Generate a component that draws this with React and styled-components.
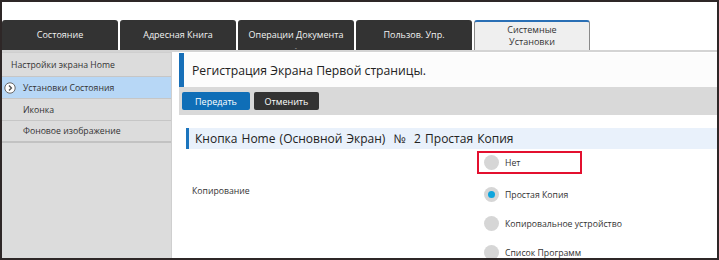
import React from 'react'
import styled, { createGlobalStyle } from 'styled-components'

const Global = createGlobalStyle`
  html, body { margin: 0; padding: 0; background: #fff; }
  body { font-family: "Open Sans", "Noto Sans", sans-serif; }
  * { box-sizing: border-box; }
`

const Frame = styled.div`
  width: 719px;
  height: 260px;
  border: 2px solid #2e2727;
  overflow: hidden;
  background: #fff;
  display: flex;
  flex-direction: column;
`

const TopGap = styled.div`
  height: 18px;
  flex: none;
`

const TabBar = styled.div`
  display: flex;
  gap: 2px;
  height: 32px;
  flex: none;
  border-bottom: 2px solid #d4d4d4;
`

const Tab = styled.div`
  width: 116px;
  height: 30px;
  display: flex;
  flex-direction: column;
  align-items: center;
  justify-content: center;
  text-align: center;
  font-size: 9px;
  line-height: 12px;
  border-radius: 3px 3px 0 0;
  background: ${p => (p.active ? '#efefef' : '#333333')};
  color: ${p => (p.active ? '#333' : '#f2f2f2')};
  border-top: ${p => (p.active ? '2px solid #2a6fb5' : 'none')};
  border-left: ${p => (p.active ? '1px solid #8a8a8a' : 'none')};
  border-right: ${p => (p.active ? '1px solid #8a8a8a' : 'none')};
  position: relative;
`

const TabDash = styled.span`
  position: absolute;
  bottom: -1px;
  font-size: 7px;
  line-height: 6px;
  color: #aaa;
`

const Body = styled.div`
  flex: 1;
  display: flex;
  min-height: 0;
`

const Sidebar = styled.div`
  width: 170px;
  flex: none;
  background: #dcdcdc;
  border-right: 1px solid #cfcfcf;
  border-top: 1px solid #cfcfcf;
`

const SideHeader = styled.div`
  height: 23px;
  padding-left: 9px;
  display: flex;
  align-items: center;
  font-size: 8.7px;
  color: #333;
`

const SideItem = styled.div`
  height: 23px;
  display: flex;
  align-items: center;
  padding-left: 21px;
  position: relative;
  font-size: 8.7px;
  color: #333;
  border-top: 1px solid #c6c6c6;
  border-bottom: 1px solid #c6c6c6;
  margin-bottom: -1px;
  background: ${p => (p.selected ? '#b7d7f6' : 'transparent')};
  &:last-child {
    border-bottom: 2px solid #c2c2c2;
  }
`

const SideIcon = styled.svg`
  position: absolute;
  left: 2px;
  top: 5px;
`

const Main = styled.div`
  flex: 1;
  padding: 1px 0 0 7px;
  display: flex;
  flex-direction: column;
  min-width: 0;
`

const TitleBox = styled.div`
  height: 34px;
  flex: none;
  background: #fcfcfc;
  border-left: 5px solid #176fb8;
  display: flex;
  align-items: center;
  padding-left: 8px;
  font-size: 12.2px;
  color: #222;
`

const Toolbar = styled.div`
  height: 28px;
  flex: none;
  background: #d9d9d9;
  display: flex;
  align-items: center;
  gap: 4px;
  padding-left: 3px;
`

const Button = styled.button`
  height: 18px;
  padding: 0;
  width: ${p => (p.primary ? '68px' : '65px')};
  border: none;
  border-radius: 2px;
  font-family: inherit;
  font-size: 9px;
  color: #fff;
  background: ${p => (p.primary ? '#0f6eb7' : '#333333')};
`

const Section = styled.div`
  margin: 13px 0 0 7px;
  height: 21px;
  flex: none;
  background: #e9f1fb;
  border-left: 3px solid #1b74bd;
  display: flex;
  align-items: center;
  padding-left: 6px;
  font-size: 12px;
  color: #222;
  word-spacing: 1px;
`

const FormRow = styled.div`
  display: grid;
  grid-template-columns: 285px 1fr;
  margin-left: 13px;
  margin-top: 2px;
`

const FieldLabel = styled.div`
  font-size: 8.7px;
  color: #333;
  padding-top: 34px;
`

const Options = styled.div`
  display: flex;
  flex-direction: column;
`

const Option = styled.div`
  width: ${p => (p.highlight ? '105px' : 'auto')};
  height: ${p => (p.highlight ? '23px' : '29px')};
  flex: none;
  display: flex;
  align-items: center;
  gap: 6px;
  padding-left: ${p => (p.highlight ? '5px' : '7px')};
  border: ${p => (p.highlight ? '2.5px solid #e3102f' : 'none')};
  margin-bottom: ${p => (p.highlight ? '6px' : '0')};
  font-size: 8.7px;
  color: #333;
`

const Radio = styled.span`
  width: 15px;
  height: 15px;
  border-radius: 50%;
  background: #d6d6d6;
  flex: none;
  display: flex;
  align-items: center;
  justify-content: center;
  &::after {
    content: '';
    width: 7px;
    height: 7px;
    border-radius: 50%;
    background: #0ea5dd;
    display: ${p => (p.checked ? 'block' : 'none')};
  }
`

const tabs = ['Состояние', 'Адресная Книга', 'Операции Документа', 'Пользов. Упр.']

const options = [
  { label: 'Нет', highlight: true },
  { label: 'Простая Копия', checked: true },
  { label: 'Копировальное устройство' },
  { label: 'Список Программ' }
]

export default function App() {
  return (
    <>
      <Global />
      <Frame>
        <TopGap />
        <TabBar>
          {tabs.map((t, i) => (
            <Tab key={t}>
              {t}
              {i === 2 && <TabDash>-</TabDash>}
            </Tab>
          ))}
          <Tab active>
            Системные
            <br />
            Установки
          </Tab>
        </TabBar>
        <Body>
          <Sidebar>
            <SideHeader>Настройки экрана Home</SideHeader>
            <SideItem selected>
              <SideIcon width="12" height="12" viewBox="0 0 12 12">
                <circle cx="6" cy="6" r="5.2" fill="#fff" stroke="#666" strokeWidth="1" />
                <path d="M5 3.6 L7.4 6 L5 8.4" fill="none" stroke="#555" strokeWidth="1.4" />
              </SideIcon>
              Установки Состояния
            </SideItem>
            <SideItem>Иконка</SideItem>
            <SideItem>Фоновое изображение</SideItem>
          </Sidebar>
          <Main>
            <TitleBox>Регистрация Экрана Первой страницы.</TitleBox>
            <Toolbar>
              <Button primary>Передать</Button>
              <Button>Отменить</Button>
            </Toolbar>
            <Section>Кнопка Home (Основной Экран) &nbsp;№ &nbsp;2 Простая Копия</Section>
            <FormRow>
              <FieldLabel>Копирование</FieldLabel>
              <Options>
                {options.map(o => (
                  <Option key={o.label} highlight={o.highlight}>
                    <Radio checked={o.checked} />
                    {o.label}
                  </Option>
                ))}
              </Options>
            </FormRow>
          </Main>
        </Body>
      </Frame>
    </>
  )
}
